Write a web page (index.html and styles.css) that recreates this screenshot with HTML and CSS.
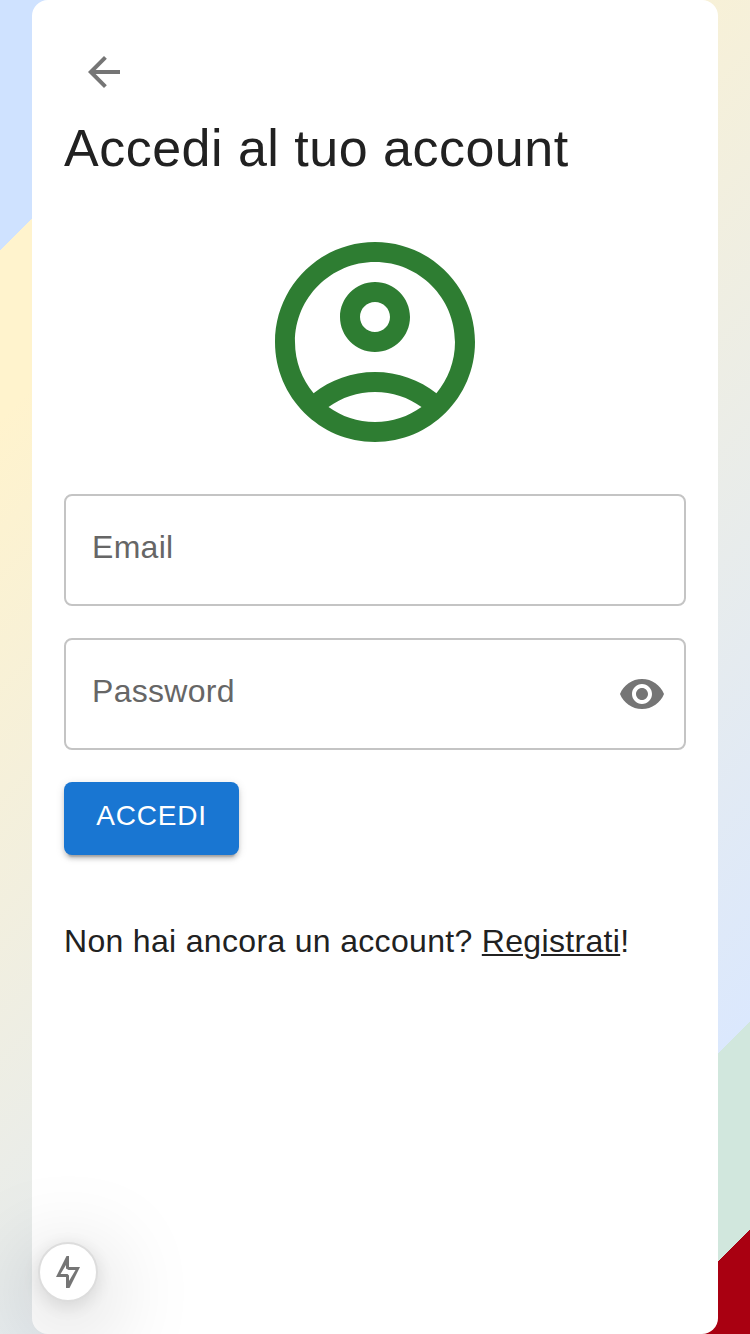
FILE: index.html
```html
<!DOCTYPE html>
<html lang="it">
<head>
<meta charset="utf-8">
<title>Accedi</title>
<link rel="stylesheet" href="styles.css">
</head>
<body>
<main class="card">
  <button class="back" aria-label="Indietro"><svg class="icon" viewBox="0 0 24 24"><path d="M20 11H7.83l5.59-5.59L12 4l-8 8 8 8 1.41-1.41L7.83 13H20v-2z"/></svg></button>
  <h1 class="title">Accedi al tuo account</h1>
  <svg class="avatar" viewBox="0 0 24 24"><path d="M12 2C6.48 2 2 6.48 2 12s4.48 10 10 10 10-4.48 10-10S17.52 2 12 2zM7.35 18.5C8.66 17.56 10.26 17 12 17s3.34.56 4.65 1.5c-1.31.94-2.91 1.5-4.65 1.5s-3.34-.56-4.65-1.5zm10.79-1.38C16.45 15.8 14.32 15 12 15s-4.45.8-6.14 2.12C4.7 15.73 4 13.95 4 12c0-4.42 3.58-8 8-8s8 3.58 8 8c0 1.95-.7 3.73-1.86 5.12z"/><path d="M12 6c-1.93 0-3.5 1.57-3.5 3.5S10.07 13 12 13s3.5-1.57 3.5-3.5S13.93 6 12 6zm0 5c-.83 0-1.5-.67-1.5-1.5S11.17 8 12 8s1.5.67 1.5 1.5S12.83 11 12 11z"/></svg>
  <div class="field"><span class="label">Email</span></div>
  <div class="field"><span class="label">Password</span><svg class="icon" viewBox="0 0 24 24"><path d="M12 4.5C7 4.5 2.73 7.61 1 12c1.73 4.39 6 7.5 11 7.5s9.27-3.11 11-7.5c-1.73-4.39-6-7.5-11-7.5zM12 17c-2.76 0-5-2.24-5-5s2.24-5 5-5 5 2.24 5 5-2.24 5-5 5zm0-8c-1.66 0-3 1.34-3 3s1.34 3 3 3 3-1.34 3-3-1.34-3-3-3z"/></svg></div>
  <button class="submit">ACCEDI</button>
  <p class="signup">Non hai ancora un account? <a class="link" href="#">Registrati</a>!</p>
</main>
<div class="indicator"><svg class="bolt" viewBox="0 0 32 36"><path fill-rule="evenodd" d="M14.500 2H17V13H28L17.500 34H14V23H4ZM14 11L8.500 20H15.500L17 21.500V27L23.500 16H16.500L14 14.500Z"/></svg></div>
</body>
</html>
```
FILE: styles.css
```css
* { box-sizing: border-box; }
body {
  margin: 0;
  height: 1334px;
  padding: 0 32px;
  overflow: hidden;
  font-family: "Liberation Sans", Helvetica, Arial, sans-serif;
  color: #212121;
  background: linear-gradient(135deg, #cfe2ff 12%, #fff3cd 12%, #fff3cd 20%, #dbe8fd 85%, #d1e7dd 85%, #d1e7dd 95%, #a90011 95%);
}
.card {
  display: flex;
  flex-direction: column;
  align-items: flex-start;
  height: 1334px;
  padding: 32px;
  border-radius: 16px;
  background: #fff;
}
.back {
  display: flex;
  height: 80px;
  padding: 16px;
  padding-left: 16px;
  border: 0;
  background: none;
}
.icon {
  width: 48px;
  height: 48px;
  fill: #757575;
}
.title {
  margin: 4px 0 0;
  font-size: 52px;
  line-height: 64px;
  font-weight: 400;
  letter-spacing: 0.49px;
  white-space: nowrap;
}
.avatar {
  width: 240px;
  height: 240px;
  margin: 42px 0 32px;
  align-self: center;
  fill: #2e7d32;
}
.field {
  display: flex;
  align-items: center;
  justify-content: space-between;
  width: 622px;
  height: 112px;
  margin-bottom: 32px;
  padding: 0 18px 0 26px;
  border: 2px solid #c4c4c4;
  border-radius: 8px;
}
.label {
  margin-top: -6px;
  font-size: 32px;
  line-height: 46px;
  letter-spacing: 0.3px;
  color: #666;
}
.submit {
  width: 175px;
  height: 73px;
  padding: 0 0 5px;
  border: 0;
  border-radius: 8px;
  font: 28px "Liberation Sans", Helvetica, Arial, sans-serif;
  letter-spacing: 0.8px;
  color: #fff;
  background: #1976d2;
  box-shadow: 0 6px 2px -4px rgba(0,0,0,.2), 0 4px 4px rgba(0,0,0,.14), 0 2px 10px rgba(0,0,0,.12);
}
.signup {
  margin: 62px 0 0;
  font-size: 32px;
  line-height: 48px;
  letter-spacing: 0.32px;
  white-space: nowrap;
}
.link {
  color: inherit;
  text-decoration: underline;
  text-decoration-thickness: 2px;
  text-underline-offset: 2px;
}
.indicator {
  position: fixed;
  left: 38px;
  bottom: 32px;
  display: flex;
  align-items: center;
  justify-content: center;
  width: 60px;
  height: 60px;
  border: 2px solid #ddd;
  border-radius: 50%;
  background: #fff;
  box-shadow: 0 20px 90px 4px rgba(0,0,0,.25), 0 4px 20px rgba(0,0,0,.12);
}
.bolt {
  width: 32px;
  height: 36px;
  fill: #757575;
}
```
